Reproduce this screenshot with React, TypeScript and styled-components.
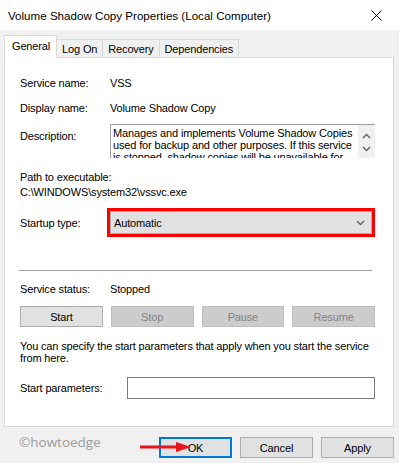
import React from 'react';
import styled, { createGlobalStyle, css } from 'styled-components';

const GlobalStyle = createGlobalStyle`
  html, body {
    margin: 0;
    padding: 0;
    background: #f0f0f0;
  }
  body {
    font-family: "Liberation Sans", Arial, sans-serif;
    font-size: 11px;
    letter-spacing: -0.15px;
    color: #000;
  }
`;

const Window = styled.div`
  width: 399px;
  height: 463px;
  background: #f0f0f0;
  display: flex;
  flex-direction: column;
  overflow: hidden;
`;

const TitleBar = styled.div`
  height: 30px;
  background: #fff;
  display: flex;
  align-items: center;
  justify-content: space-between;
  padding: 0 8px 0 8px;
  box-sizing: border-box;
  font-size: 11.6px;
  letter-spacing: 0;
`;

const CloseBox = styled.div`
  width: 30px;
  display: flex;
  justify-content: center;
  align-items: center;
`;

const Body = styled.div`
  padding: 5px 5px 0 4px;
  display: flex;
  flex-direction: column;
`;

const TabStrip = styled.div`
  display: flex;
  align-items: flex-end;
  height: 22px;
  position: relative;
  z-index: 1;
`;

const Tab = styled.div<{ $active?: boolean }>`
  height: 18px;
  padding: 0 5px;
  display: flex;
  align-items: center;
  border: 1px solid #d9d9d9;
  border-bottom: none;
  background: #f0f0f0;
  margin-left: -1px;
  box-sizing: border-box;
  ${p => p.$active && css`
    height: 23px;
    margin-left: 0;
    padding: 0 6px 2px 7px;
    background: #fff;
    margin-bottom: -1px;
  `}
`;

const Panel = styled.div`
  height: 370px;
  background: #fff;
  border: 1px solid #d9d9d9;
  box-sizing: border-box;
  padding: 12px 18px 0 15px;
  display: flex;
  flex-direction: column;
`;

const Row = styled.div<{ $top?: number; $h?: number; $alignTop?: boolean }>`
  display: flex;
  align-items: ${p => (p.$alignTop ? 'flex-start' : 'center')};
  margin-top: ${p => p.$top ?? 0}px;
  min-height: ${p => p.$h ?? 15}px;
`;

const Label = styled.div<{ $w?: number; $pad?: number }>`
  width: ${p => p.$w ?? 90}px;
  padding-top: ${p => p.$pad ?? 0}px;
  flex-shrink: 0;
`;

const Line = styled.div<{ $top?: number }>`
  line-height: 15px;
  margin-top: ${p => p.$top ?? 0}px;
  white-space: nowrap;
`;

const DescBox = styled.div`
  width: 266px;
  height: 34px;
  border-top: 1px solid #a0a0a0;
  border-left: 1px solid #a0a0a0;
  box-sizing: border-box;
  display: flex;
  overflow: hidden;
`;

const DescText = styled.div`
  flex: 1;
  padding: 2px 0 0 2px;
  line-height: 12px;
  white-space: nowrap;
  overflow: hidden;
`;

const ScrollBar = styled.div`
  width: 17px;
  background: #f0f0f0;
  display: flex;
  flex-direction: column;
  align-items: center;
  justify-content: space-around;
  padding: 4px 0 2px;
  box-sizing: border-box;
`;

const Highlight = styled.div`
  border: 3px solid #f00;
  width: 271px;
  height: 29px;
  box-sizing: border-box;
  margin-left: -3px;
`;

const Select = styled.div`
  height: 100%;
  background: #e1e1e1;
  border: 1px solid #adadad;
  box-sizing: border-box;
  display: flex;
  align-items: center;
  justify-content: space-between;
  padding: 0 6px 0 3px;
`;

const Separator = styled.div`
  height: 1px;
  background: #a0a0a0;
  margin: 33px 3px 0 -1px;
`;

const ButtonRow = styled.div`
  display: flex;
  gap: 8px;
  margin-top: 10px;
`;

const Button = styled.button<{ $primary?: boolean; $w?: number }>`
  width: ${p => p.$w ?? 83}px;
  height: 21px;
  background: #e1e1e1;
  border: 1px solid #adadad;
  font-family: inherit;
  font-size: 11px;
  letter-spacing: -0.15px;
  color: #000;
  padding: 0;
  box-sizing: border-box;
  &:disabled {
    background: #cccccc;
    border-color: #bfbfbf;
    color: #838383;
  }
  ${p => p.$primary && css`
    border: 2px solid #0078d7;
  `}
`;

const Paragraph = styled.div`
  margin-top: 13px;
  line-height: 12px;
  white-space: nowrap;
`;

const TextInput = styled.div`
  width: 250px;
  height: 22px;
  border: 1px solid #7a7a7a;
  box-sizing: border-box;
  background: #fff;
`;

const Footer = styled.div`
  position: relative;
  display: flex;
  align-items: flex-start;
  padding: 10px 0 0 0;
  height: 36px;
  box-sizing: border-box;
`;

const Watermark = styled.div`
  color: #9c9c9c;
  font-size: 13.5px;
  font-family: "Open Sans", "Liberation Sans", sans-serif;
  margin: -4px 0 0 15px;
  letter-spacing: 0;
  flex: 1;
`;

const FooterButtons = styled.div`
  display: flex;
  gap: 8px;
`;

const Arrow = styled.svg`
  position: absolute;
  left: 136px;
  top: 15px;
`;

const Chevron = ({ dir }: { dir: 'up' | 'down' }) => (
  <svg width="9" height="6" viewBox="0 0 9 6">
    <polyline
      points={dir === 'up' ? '1,5 4.5,1.5 8,5' : '1,1 4.5,4.5 8,1'}
      fill="none"
      stroke="#606060"
      strokeWidth="1.4"
    />
  </svg>
);

export default function App() {
  return (
    <Window>
      <GlobalStyle />
      <TitleBar>
        <span>Volume Shadow Copy Properties (Local Computer)</span>
        <CloseBox>
          <svg width="11" height="11" viewBox="0 0 11 11">
            <path d="M0.5 0.5 L10.5 10.5 M10.5 0.5 L0.5 10.5" stroke="#000" strokeWidth="1" />
          </svg>
        </CloseBox>
      </TitleBar>

      <Body>
        <TabStrip>
          <Tab $active>General</Tab>
          <Tab>Log On</Tab>
          <Tab>Recovery</Tab>
          <Tab>Dependencies</Tab>
        </TabStrip>

        <Panel>
          <Row $h={25}>
            <Label>Service name:</Label>
            <span>VSS</span>
          </Row>
          <Row $h={25}>
            <Label>Display name:</Label>
            <span>Volume Shadow Copy</span>
          </Row>
          <Row $top={4} $alignTop>
            <Label $pad={6}>Description:</Label>
            <DescBox>
              <DescText>
                Manages and implements Volume Shadow Copies<br />
                used for backup and other purposes. If this service<br />
                is stopped, shadow copies will be unavailable for
              </DescText>
              <ScrollBar>
                <Chevron dir="up" />
                <Chevron dir="down" />
              </ScrollBar>
            </DescBox>
          </Row>

          <Line $top={12}>Path to executable:</Line>
          <Line>C:\WINDOWS\system32\vssvc.exe</Line>

          <Row $top={8}>
            <Label>Startup type:</Label>
            <Highlight>
              <Select>
                <span>Automatic</span>
                <Chevron dir="down" />
              </Select>
            </Highlight>
          </Row>

          <Separator />

          <Row $top={10}>
            <Label>Service status:</Label>
            <span>Stopped</span>
          </Row>

          <ButtonRow>
            <Button>Start</Button>
            <Button disabled>Stop</Button>
            <Button disabled>Pause</Button>
            <Button disabled>Resume</Button>
          </ButtonRow>

          <Paragraph>
            You can specify the start parameters that apply when you start the service<br />
            from here.
          </Paragraph>

          <Row $top={13}>
            <Label $w={107}>Start parameters:</Label>
            <TextInput />
          </Row>
        </Panel>

        <Footer>
          <Watermark>©howtoedge</Watermark>
          <FooterButtons>
            <Button $primary $w={73}>OK</Button>
            <Button $w={73}>Cancel</Button>
            <Button $w={73}>Apply</Button>
          </FooterButtons>
          <Arrow width="52" height="10" viewBox="0 0 52 10">
            <line x1="0" y1="5" x2="40" y2="5" stroke="#e8141b" strokeWidth="3" />
            <polygon points="36,0 51,5 36,10" fill="#e8141b" />
          </Arrow>
        </Footer>
      </Body>
    </Window>
  );
}
